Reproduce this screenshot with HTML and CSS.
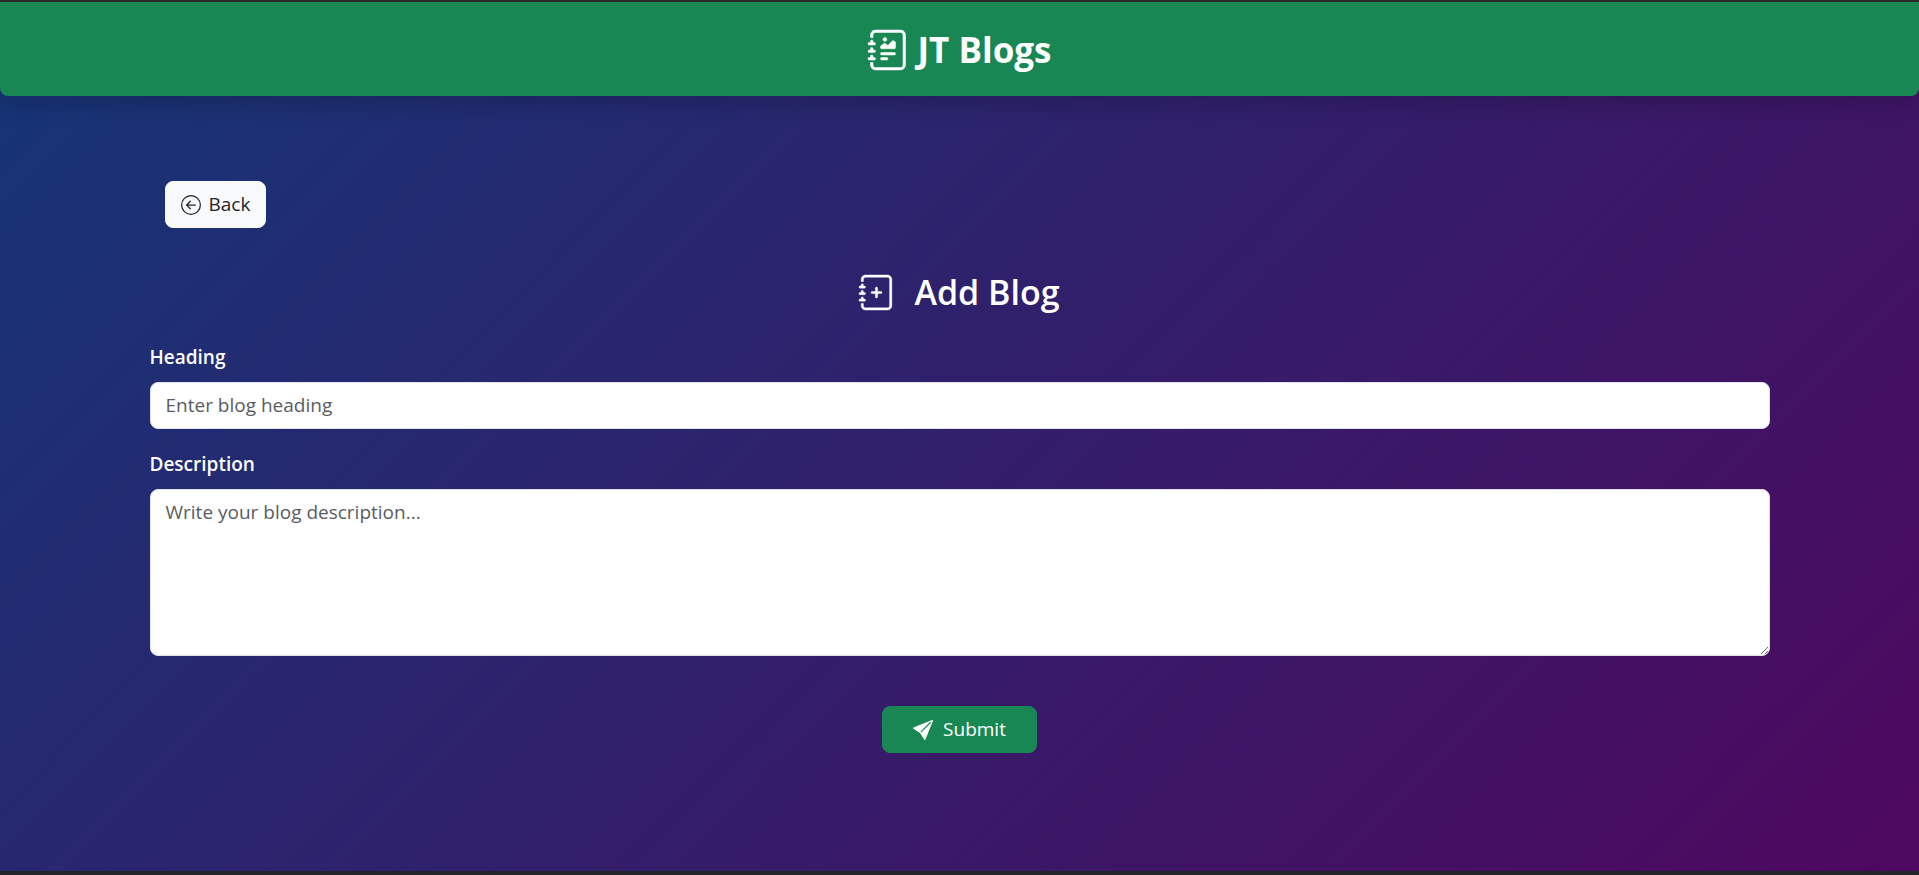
FILE: index.html
```html
<!DOCTYPE html>
<html lang="en">
<head>
<meta charset="utf-8">
<meta name="viewport" content="width=device-width, initial-scale=1">
<title>JT Blogs</title>
<link rel="stylesheet" href="styles.css">
</head>
<body>
<header class="navbar">
  <a class="brand" href="#">
    <svg class="brand-icon" viewBox="0 0 16 16" fill="currentColor" aria-hidden="true">
      <path d="M7.5 3.75a.75.75 0 1 1-1.5 0 .75.75 0 0 1 1.5 0m-.861 1.542 1.33.886 1.854-1.855a.25.25 0 0 1 .289-.047L11 4.75V7a.5.5 0 0 1-.5.5h-5A.5.5 0 0 1 5 7v-.5s1.54-1.274 1.639-1.208M5 9.5a.5.5 0 0 1 .5-.5h5a.5.5 0 0 1 0 1h-5a.5.5 0 0 1-.5-.5m0 2a.5.5 0 0 1 .5-.5h2a.5.5 0 0 1 0 1h-2a.5.5 0 0 1-.5-.5"/>
      <path d="M3 0h10a2 2 0 0 1 2 2v12a2 2 0 0 1-2 2H3a2 2 0 0 1-2-2v-1h1v1a1 1 0 0 0 1 1h10a1 1 0 0 0 1-1V2a1 1 0 0 0-1-1H3a1 1 0 0 0-1 1v1H1V2a2 2 0 0 1 2-2"/>
      <path d="M1 5v-.5a.5.5 0 0 1 1 0V5h.5a.5.5 0 0 1 0 1h-2a.5.5 0 0 1 0-1zm0 3v-.5a.5.5 0 0 1 1 0V8h.5a.5.5 0 0 1 0 1h-2a.5.5 0 0 1 0-1zm0 3v-.5a.5.5 0 0 1 1 0v.5h.5a.5.5 0 0 1 0 1h-2a.5.5 0 0 1 0-1z"/>
    </svg>
    <span>JT Blogs</span>
  </a>
</header>
<main class="container">
  <button class="btn btn-light" type="button">
    <svg class="icon" viewBox="0 0 16 16" fill="currentColor" aria-hidden="true">
      <path fill-rule="evenodd" d="M1 8a7 7 0 1 0 14 0A7 7 0 0 0 1 8m15 0A8 8 0 1 1 0 8a8 8 0 0 1 16 0m-4.5-.5a.5.5 0 0 1 0 1H5.707l2.147 2.146a.5.5 0 0 1-.708.708l-3-3a.5.5 0 0 1 0-.708l3-3a.5.5 0 1 1 .708.708L5.707 7.5z"/>
    </svg>
    <span>Back</span>
  </button>
  <h1 class="title">
    <svg class="title-icon" viewBox="0 0 16 16" fill="currentColor" aria-hidden="true">
      <path fill-rule="evenodd" d="M8 5.5a.5.5 0 0 1 .5.5v1.5H10a.5.5 0 0 1 0 1H8.5V10a.5.5 0 0 1-1 0V8.5H6a.5.5 0 0 1 0-1h1.500V6a.5.5 0 0 1 .5-.5"/>
      <path d="M3 0h10a2 2 0 0 1 2 2v12a2 2 0 0 1-2 2H3a2 2 0 0 1-2-2v-1h1v1a1 1 0 0 0 1 1h10a1 1 0 0 0 1-1V2a1 1 0 0 0-1-1H3a1 1 0 0 0-1 1v1H1V2a2 2 0 0 1 2-2"/>
      <path d="M1 5v-.5a.5.5 0 0 1 1 0V5h.5a.5.5 0 0 1 0 1h-2a.5.5 0 0 1 0-1zm0 3v-.5a.5.5 0 0 1 1 0V8h.5a.5.5 0 0 1 0 1h-2a.5.5 0 0 1 0-1zm0 3v-.5a.5.5 0 0 1 1 0v.5h.5a.5.5 0 0 1 0 1h-2a.5.5 0 0 1 0-1z"/>
    </svg>
    <span>Add Blog</span>
  </h1>
  <form class="form">
    <div class="field">
      <label class="label" for="heading">Heading</label>
      <input class="control" id="heading" type="text" placeholder="Enter blog heading">
    </div>
    <div class="field">
      <label class="label" for="description">Description</label>
      <textarea class="control" id="description" rows="5" placeholder="Write your blog description..."></textarea>
    </div>
    <button class="btn btn-success" type="submit">
      <svg class="icon" viewBox="0 0 16 16" fill="currentColor" aria-hidden="true">
        <path d="M15.964.686a.5.5 0 0 0-.65-.65L.767 5.855H.766l-.452.18a.5.5 0 0 0-.082.887l.41.26.001.002 4.995 3.178 3.178 4.995.002.002.26.41a.5.5 0 0 0 .886-.083zm-1.833 1.890L6.637 10.070l-.215-.338a.5.5 0 0 0-.154-.154l-.338-.215 7.494-7.494 1.178-.471z"/>
      </svg>
      <span>Submit</span>
    </button>
  </form>
</main>
</body>
</html>
```
FILE: styles.css
```css
*, *::before, *::after { box-sizing: border-box; }

body {
  margin: 0;
  min-height: 100vh;
  display: flex;
  flex-direction: column;
  border-top: 2px solid #2b2b2b;
  border-bottom: 4px solid #212529;
  background: #212529 linear-gradient(135deg, #153677, #4e085f) no-repeat padding-box;
  color: #fff;
  font-family: "Segoe UI", "Open Sans", "Noto Sans", sans-serif;
  font-size: 19px;
  line-height: 29px;
}

.navbar {
  display: flex;
  justify-content: center;
  padding: 21px 20px 19px;
  background: #198754;
  border-radius: 0 0 8px 8px;
  box-shadow: 0 10px 20px rgba(0, 0, 0, 0.15);
}

.brand {
  display: flex;
  align-items: center;
  gap: 10px;
  color: inherit;
  text-decoration: none;
  font-size: 35px;
  font-weight: 700;
  line-height: 54px;
}

.brand-icon {
  width: 40px;
  height: 40px;
}

.brand-icon,
.title-icon {
  overflow: visible;
  stroke: currentColor;
  stroke-width: 0.2;
}

.container {
  width: 100%;
  max-width: 1650px;
  margin: 0 auto;
  padding: 85px 15px 0;
}

.btn {
  display: flex;
  align-items: center;
  gap: 8px;
  padding: 8px 15px;
  border: 1px solid transparent;
  border-radius: 8px;
  font: inherit;
  cursor: pointer;
}

.btn-light {
  margin-left: 15px;
  background: #f8f9fa;
  border-color: #f8f9fa;
  color: #212529;
}

.btn-success {
  gap: 10px;
  margin: 50px auto 0;
  padding: 8px 30px;
  background: #198754;
  border-color: #198754;
  color: #fff;
}

.icon { width: 20px; height: 20px; }

.title {
  display: flex;
  justify-content: center;
  align-items: center;
  gap: 20px;
  margin: 43px 0 30px;
  font-size: 34px;
  font-weight: 600;
  line-height: 42px;
}

.title-icon { width: 35px; height: 35px; }

.field + .field { margin-top: 21px; }

.label {
  display: block;
  margin-bottom: 10px;
  font-weight: 600;
}

.control {
  display: block;
  width: 100%;
  padding: 8px 15px;
  border: 1px solid #dee2e6;
  border-radius: 8px;
  background: #fff;
  color: #212529;
  font: inherit;
}

.control::placeholder { color: #595c5f; opacity: 1; }

textarea.control {
  min-height: 167px;
  resize: vertical;
}
```
